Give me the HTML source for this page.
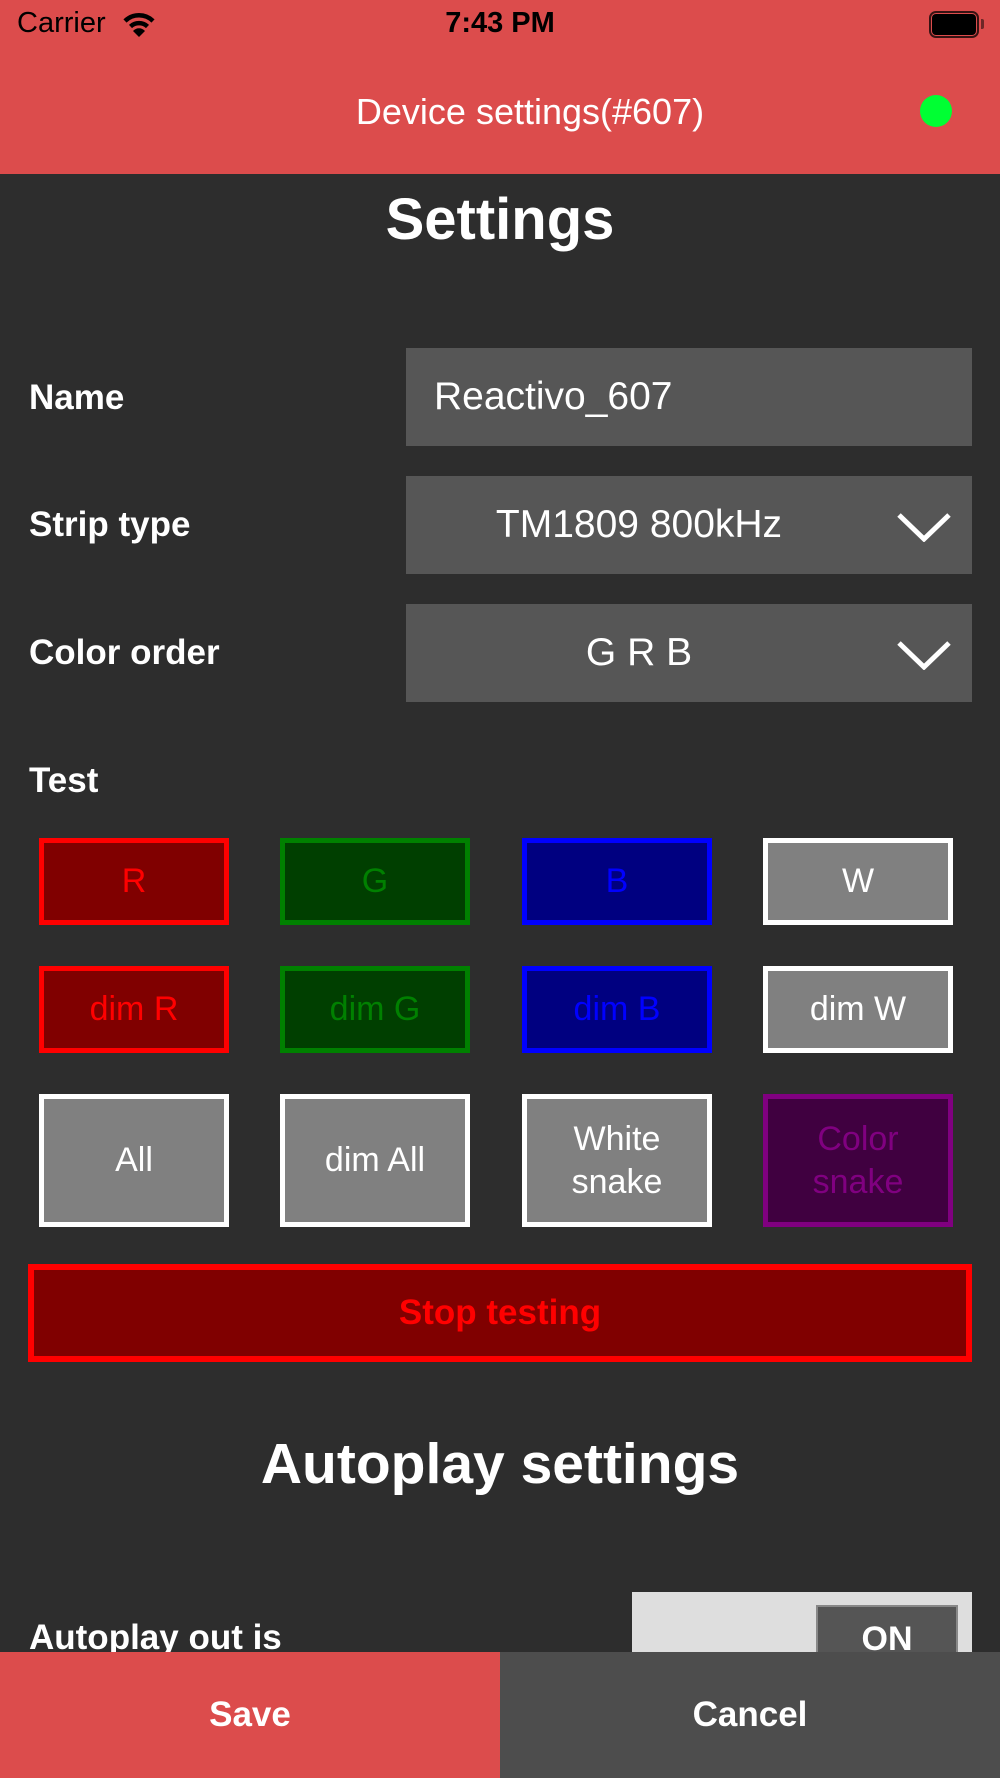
<!DOCTYPE html>
<html><head><meta charset="utf-8"><style>
*{margin:0;padding:0;box-sizing:border-box}
body{width:1000px;height:1778px;overflow:hidden;background:#2d2d2d;font-family:"Liberation Sans",sans-serif;color:#fff;position:relative}
.a{position:absolute}
.nav{left:0;top:0;width:1000px;height:174px;background:#dc4c4c}
.lbl{left:29px;font-weight:bold;font-size:35px}
.box{left:406px;width:566px;height:98px;background:#565656;font-size:39px;display:flex;align-items:center}
.btn{width:190px;border:5px solid;display:flex;align-items:center;justify-content:center;text-align:center;font-size:34px;line-height:43px}
.r{background:#800000;border-color:#f00;color:#f00}
.g{background:#003f00;border-color:#008000;color:#008000}
.b{background:#000080;border-color:#00f;color:#00f}
.w{background:#808080;border-color:#fff;color:#fff}
.p{background:#400040;border-color:#800080;color:#800080}
.chev{position:absolute;right:20px;top:36px}
</style></head><body>
<div class="a nav"></div>
<div class="a" style="left:17px;top:7px;font-size:29px;color:#000">Carrier</div>
<svg class="a" style="left:122px;top:12px" width="34" height="26" viewBox="0 0 34 26"><path d="M3 9 A20 20 0 0 1 31 9" stroke="#000" stroke-width="4.5" fill="none"/><path d="M8.5 14.5 A12.5 12.5 0 0 1 25.5 14.5" stroke="#000" stroke-width="4.5" fill="none"/><path d="M17 25 L11 19 A8 8 0 0 1 23 19 Z" fill="#000"/></svg>
<div class="a" style="left:0;width:1000px;top:7px;text-align:center;font-size:29px;font-weight:bold;color:#000">7:43 PM</div>
<div class="a" style="left:929px;top:11px;width:50px;height:27px;border:2px solid #000;border-radius:7px;opacity:.75"></div>
<div class="a" style="left:932px;top:14px;width:44px;height:21px;background:#000;border-radius:4px"></div>
<div class="a" style="left:981px;top:19px;width:3px;height:10px;background:#000;opacity:.5;border-radius:0 2px 2px 0"></div>
<div class="a" style="left:0;width:1060px;top:91px;text-align:center;font-size:36px">Device settings(#607)</div>
<div class="a" style="left:920px;top:95px;width:32px;height:32px;border-radius:50%;background:#0f3"></div>
<div class="a" style="left:0;width:1000px;top:186px;text-align:center;font-size:58px;font-weight:bold">Settings</div>

<div class="a lbl" style="top:378px">Name</div>
<div class="a box" style="top:348px;padding-left:28px">Reactivo_607</div>
<div class="a lbl" style="top:505px">Strip type</div>
<div class="a box" style="top:476px;justify-content:center;padding-right:100px">TM1809 800kHz<svg class="chev" width="56" height="30" viewBox="0 0 56 30"><path d="M3 3 L28 27 L53 3" stroke="#fff" stroke-width="5" fill="none"/></svg></div>
<div class="a lbl" style="top:633px">Color order</div>
<div class="a box" style="top:604px;justify-content:center;padding-right:100px">G R B<svg class="chev" width="56" height="30" viewBox="0 0 56 30"><path d="M3 3 L28 27 L53 3" stroke="#fff" stroke-width="5" fill="none"/></svg></div>
<div class="a lbl" style="top:761px">Test</div>

<div class="a btn r" style="left:39px;top:838px;height:87px">R</div>
<div class="a btn g" style="left:280px;top:838px;height:87px">G</div>
<div class="a btn b" style="left:522px;top:838px;height:87px">B</div>
<div class="a btn w" style="left:763px;top:838px;height:87px">W</div>
<div class="a btn r" style="left:39px;top:966px;height:87px">dim R</div>
<div class="a btn g" style="left:280px;top:966px;height:87px">dim G</div>
<div class="a btn b" style="left:522px;top:966px;height:87px">dim B</div>
<div class="a btn w" style="left:763px;top:966px;height:87px">dim W</div>
<div class="a btn w" style="left:39px;top:1094px;height:133px">All</div>
<div class="a btn w" style="left:280px;top:1094px;height:133px">dim All</div>
<div class="a btn w" style="left:522px;top:1094px;height:133px">White<br>snake</div>
<div class="a btn p" style="left:763px;top:1094px;height:133px">Color<br>snake</div>

<div class="a" style="left:28px;top:1264px;width:944px;height:98px;background:#800000;border:6px solid #f00;color:#f00;font-weight:bold;font-size:35px;display:flex;align-items:center;justify-content:center">Stop testing</div>

<div class="a" style="left:0;width:1000px;top:1431px;text-align:center;font-size:57px;font-weight:bold">Autoplay settings</div>

<div class="a" style="left:632px;top:1592px;width:340px;height:80px;background:#dedede"></div>
<div class="a" style="left:816px;top:1605px;width:142px;height:70px;background:#555;border:2px solid #888;font-size:34px;font-weight:bold;text-align:center;padding-top:13px">ON</div>
<div class="a lbl" style="top:1618px">Autoplay out is</div>

<div class="a" style="left:0;top:1652px;width:500px;height:126px;background:#dc4c4c;font-size:35px;font-weight:bold;display:flex;align-items:center;justify-content:center">Save</div>
<div class="a" style="left:500px;top:1652px;width:500px;height:126px;background:#4d4d4d;font-size:35px;font-weight:bold;display:flex;align-items:center;justify-content:center">Cancel</div>
</body></html>
